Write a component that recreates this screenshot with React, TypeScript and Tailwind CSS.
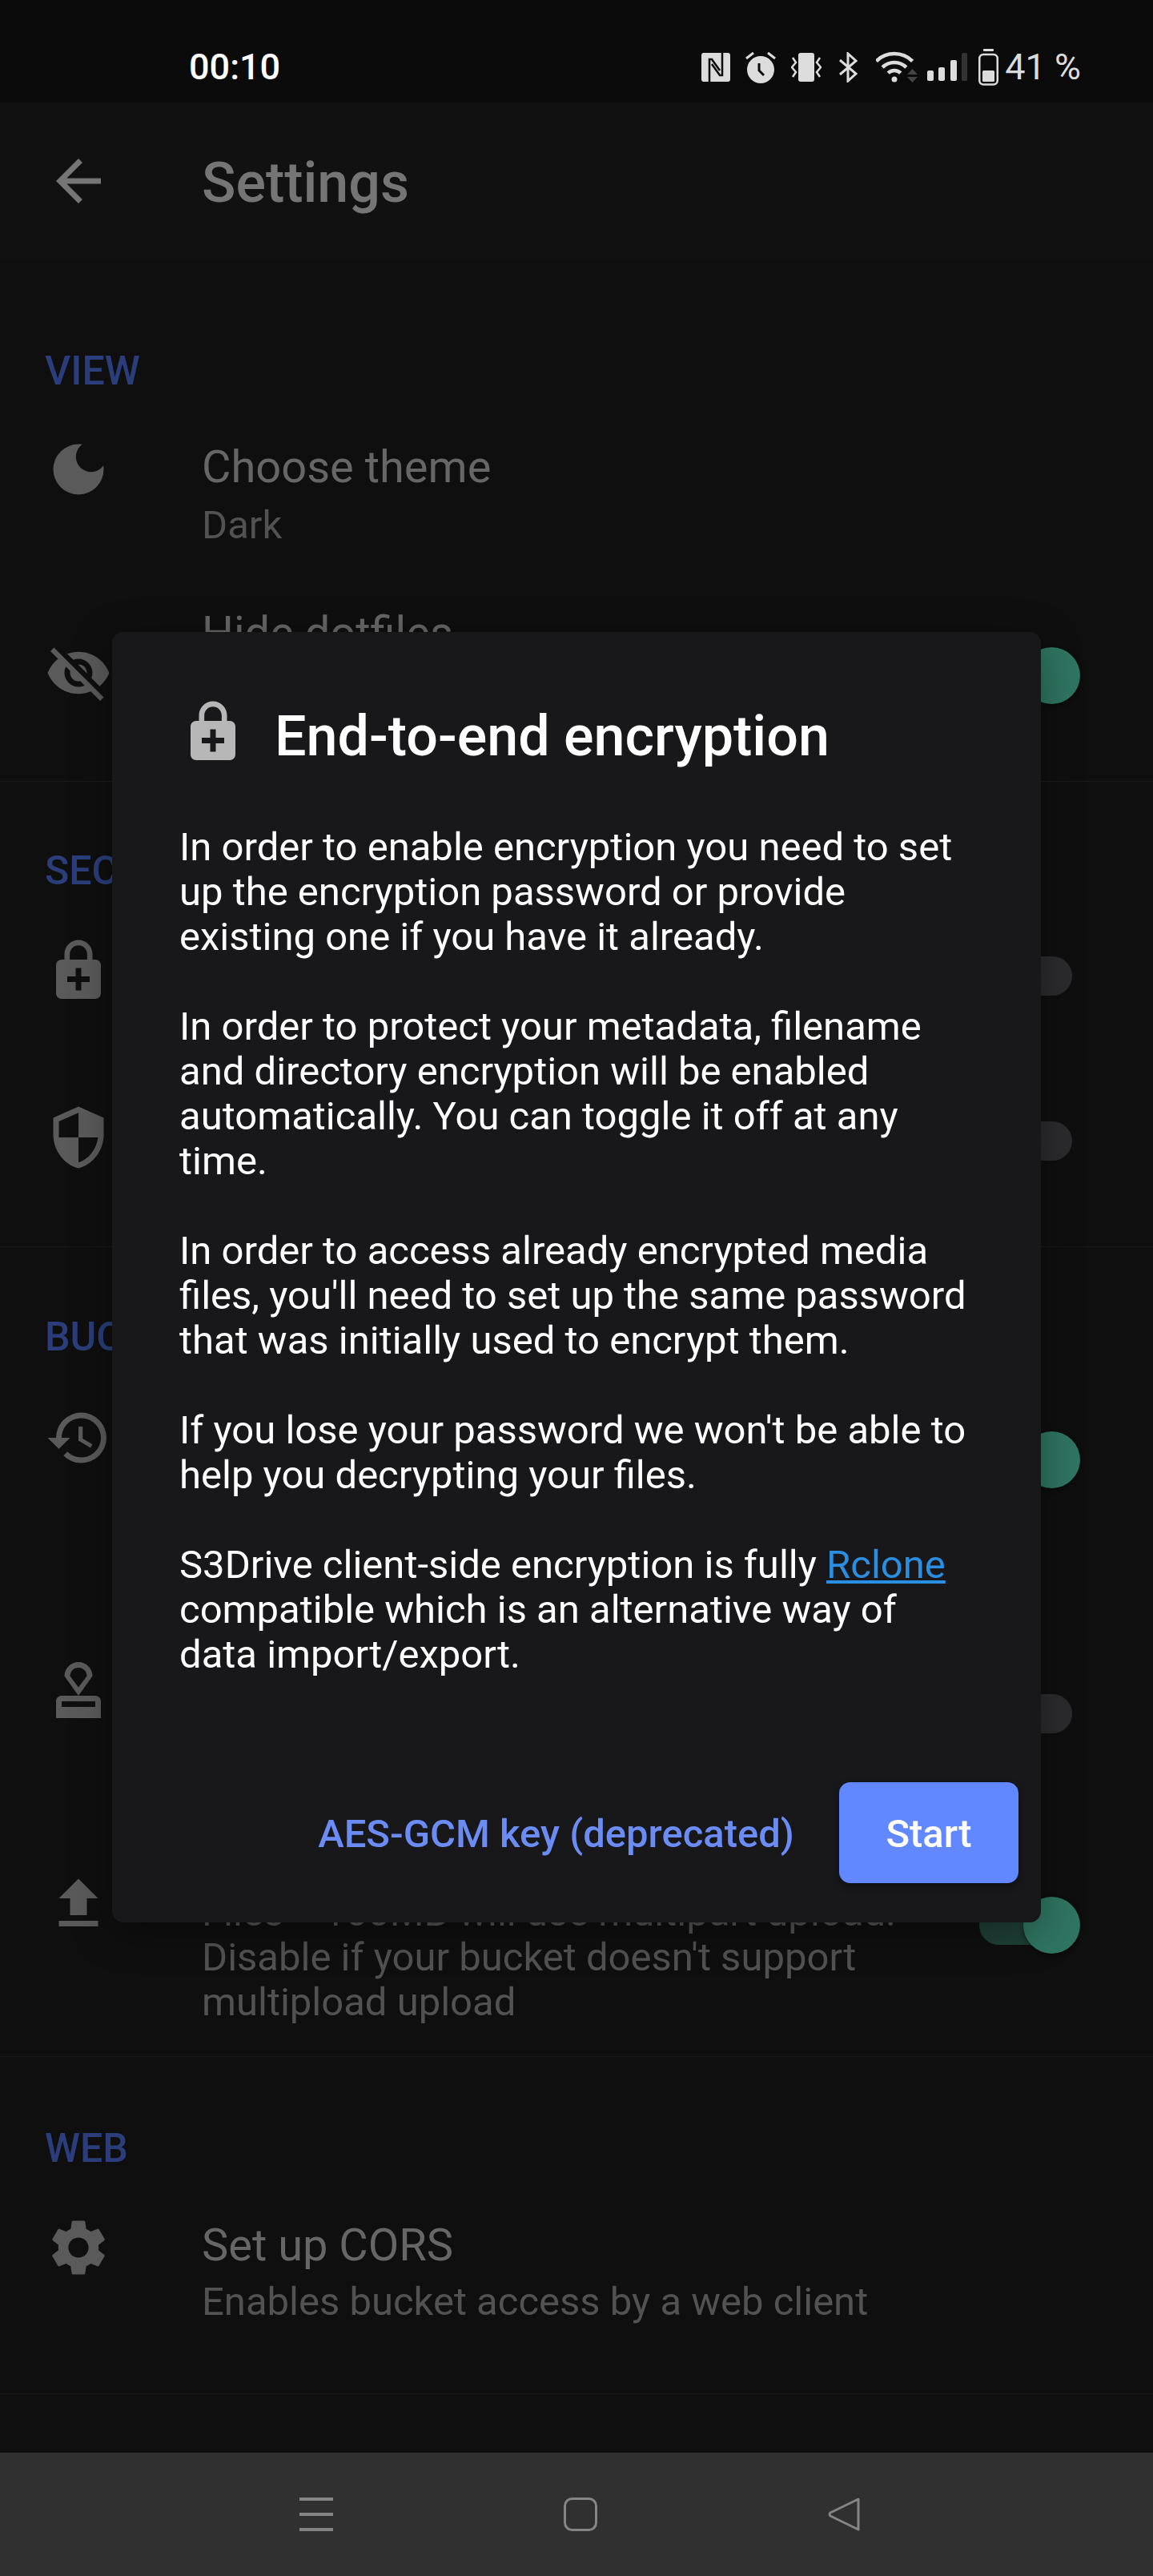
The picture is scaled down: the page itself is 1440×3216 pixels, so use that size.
import type { ReactNode } from "react";
import {
  MdApproval,
  MdArrowBack,
  MdDarkMode,
  MdEnhancedEncryption,
  MdFileUpload,
  MdHistory,
  MdSecurity,
  MdSettings,
  MdVisibilityOff,
} from "react-icons/md";

function SectionLabel({ children }: { children: ReactNode }) {
  return <div className="h-[56px] text-[50px] leading-[56px] font-medium text-[#2b3e7b]">{children}</div>;
}

function Switch({ on, className }: { on?: boolean; className: string }) {
  return (
    <div className={`relative h-[71px] w-[126px] shrink-0 ${className}`}>
      <div
        className={`absolute left-0 top-[11px] h-[49px] w-[116px] rounded-full ${on ? "bg-[#1f4137]" : "bg-[#2b2b2d]"}`}
      />
      <div
        className={`absolute top-0 h-[71px] w-[71px] rounded-full ${on ? "right-0 bg-[#2f7561]" : "left-0 bg-[#3a3a3a]"} shadow-[0_2px_6px_rgba(0,0,0,0.4)]`}
      />
    </div>
  );
}

function Row({
  icon,
  height,
  iconTop,
  children,
  toggle,
}: {
  icon: ReactNode;
  height: string;
  iconTop: string;
  children?: ReactNode;
  toggle?: ReactNode;
}) {
  return (
    <div className={`flex ${height}`}>
      <div className={`h-[84px] w-[84px] shrink-0 text-[84px] text-[#5a5a5a] ${iconTop}`}>{icon}</div>
      <div className="ml-[112px] min-w-0 flex-1">{children}</div>
      {toggle}
    </div>
  );
}

function StatusIcons() {
  return (
    <div className="flex items-center text-[#dcdcdc]">
      {/* nfc */}
      <svg width="36" height="36" viewBox="0 0 36 36">
        <rect width="36" height="36" rx="3" fill="#dcdcdc" />
        <path d="M10 36V8h3l10 14M26 0v28h-3L13 14" fill="none" stroke="#0b0b0b" strokeWidth="2.5" />
      </svg>
      {/* alarm */}
      <svg className="ml-[19px]" width="38" height="40" viewBox="0 0 38 40">
        <circle cx="19" cy="23" r="17" fill="#dcdcdc" />
        <path d="M1 9l9-7M37 9l-9-7" stroke="#dcdcdc" strokeWidth="3" />
        <path d="M17 15v9l6 6" fill="none" stroke="#0b0b0b" strokeWidth="3" />
      </svg>
      {/* vibrate */}
      <svg className="ml-[19px]" width="38" height="36" viewBox="0 0 38 36">
        <rect x="9" width="20" height="36" rx="3" fill="#dcdcdc" />
        <path d="M2 6l4 6-5 6 5 6-4 6M36 6l-4 6 5 6-5 6 4 6" fill="none" stroke="#dcdcdc" strokeWidth="2.5" />
      </svg>
      {/* bluetooth */}
      <svg className="ml-[21px]" width="24" height="38" viewBox="0 0 24 38">
        <path d="M2 10l20 17-10 9V2l10 9L2 28" fill="none" stroke="#dcdcdc" strokeWidth="3" />
      </svg>
      {/* wifi */}
      <svg className="ml-[23px]" width="52" height="40" viewBox="0 0 52 40">
        <path
          d="M0.4 12.4A32 32 0 0 1 45.6 12.4M8.2 20.2A21 21 0 0 1 37.8 20.2M15.2 27.2A11 11 0 0 1 30.8 27.2"
          fill="none"
          stroke="#dcdcdc"
          strokeWidth="4.5"
        />
        <circle cx="23" cy="35" r="3.5" fill="#dcdcdc" />
        <path d="M39 29l6.500-7 6.500 7zM39 32l6.500 7 6.500-7z" fill="#444444" />
      </svg>
      {/* signal */}
      <svg className="ml-[12px]" width="50" height="36" viewBox="0 0 50 36">
        <rect y="22" width="8" height="13" rx="2" fill="#dcdcdc" />
        <rect x="14" y="18" width="8" height="17" rx="2" fill="#dcdcdc" />
        <rect x="29" y="9" width="8" height="26" rx="2" fill="#dcdcdc" />
        <rect x="43" width="7" height="35" rx="2" fill="#333333" />
      </svg>
      {/* battery */}
      <svg className="ml-[14px]" width="25" height="46" viewBox="0 0 25 46">
        <rect x="6" width="13" height="3" rx="1" fill="#dcdcdc" />
        <rect x="1.250" y="7" width="22.500" height="37.500" rx="5" fill="none" stroke="#dcdcdc" strokeWidth="2.500" />
        <rect x="5" y="27" width="15" height="14" rx="1.500" fill="#dcdcdc" />
      </svg>
      <span className="ml-[8px] text-[45px] leading-[52px]">41 %</span>
    </div>
  );
}

function EncryptionDialog() {
  return (
    <div className="absolute left-[140px] top-[789px] flex h-[1611px] w-[1160px] flex-col rounded-[14px] bg-[#18181b] shadow-[0_12px_50px_rgba(0,0,0,0.35)]">
      <div className="mt-[83px] flex h-[84px] items-center pl-[84px]">
        <MdEnhancedEncryption className="shrink-0 text-[84px] text-[#b7b7b7]" />
        <h2 className="ml-[35px] pt-[9px] text-[70px] leading-[82px] font-medium text-white">End-to-end encryption</h2>
      </div>
      <div className="mt-[74px] flex flex-col gap-[56px] pl-[84px] pr-[80px] text-[49px] leading-[56px] text-white">
        <p>In order to enable encryption you need to set up the encryption password or provide existing one if you have it already.</p>
        <p>In order to protect your metadata, filename and directory encryption will be enabled automatically. You can toggle it off at any time.</p>
        <p>In order to access already encrypted media files, you'll need to set up the same password that was initially used to encrypt them.</p>
        <p>If you lose your password we won't be able to help you decrypting your files.</p>
        <p>
          S3Drive client-side encryption is fully <span className="text-[#2a8ee2] underline">Rclone</span> compatible which is an alternative way of data import/export.
        </p>
      </div>
      <div className="mt-auto flex items-center justify-end pb-[49px] pr-[28px]">
        <span className="pt-[3px] text-[49px] leading-[56px] font-medium text-[#6b8cf5]">AES-GCM key (deprecated)</span>
        <button className="ml-[56px] h-[126px] w-[224px] rounded-[14px] bg-[#6188ff] pt-[3px] text-[49px] font-medium text-white shadow-[0_4px_10px_rgba(0,0,0,0.35)]">
          Start
        </button>
      </div>
    </div>
  );
}

export default function App() {
  const title = "text-[56px] leading-[64px] text-[#666666]";
  const sub = "text-[49px] leading-[56px] text-[#525252]";

  return (
    <div className="relative flex h-[3216px] w-[1440px] flex-col overflow-hidden bg-[#0f0f0f] font-['Roboto',sans-serif]">
      {/* Status bar */}
      <div className="flex h-[128px] shrink-0 items-center justify-between bg-[#0b0b0b] pl-[236px] pr-[90px] pt-[40px]">
        <span className="text-[45px] leading-[52px] font-medium text-white">00:10</span>
        <StatusIcons />
      </div>

      {/* App bar */}
      <div className="flex h-[195px] shrink-0 items-center bg-[#111111] pl-[56px]">
        <MdArrowBack className="text-[84px] text-[#757575]" />
        <h1 className="ml-[112px] pt-[4px] text-[70px] leading-[82px] font-medium text-[#757575]">Settings</h1>
      </div>

      <main className="flex-1">
        <section className="border-b border-[#1a1a1a] pl-[56px] pr-[91px] pt-[112px]">
          <SectionLabel>VIEW</SectionLabel>
          <Row icon={<MdDarkMode />} height="h-[264px]" iconTop="mt-[53px]">
            <div className={`mt-[60px] ${title}`}>Choose theme</div>
            <div className={`mt-[13px] ${sub}`}>Dark</div>
          </Row>
          <Row icon={<MdVisibilityOff />} height="h-[220px]" iconTop="mt-[43px]" toggle={<Switch on className="mt-[53px]" />}>
            <div className={`mt-[3px] ${title}`}>Hide dotfiles</div>
          </Row>
        </section>

        <section className="border-b border-[#1a1a1a] pl-[56px] pr-[91px] pt-[83px]">
          <SectionLabel>SECURITY</SectionLabel>
          <Row icon={<MdEnhancedEncryption />} height="h-[208px]" iconTop="mt-[55px]" toggle={<Switch className="mt-[68px]" />} />
          <Row icon={<MdSecurity />} height="h-[233px]" iconTop="mt-[55px]" toggle={<Switch className="mt-[66px]" />} />
        </section>

        <section className="border-b border-[#1a1a1a] pl-[56px] pr-[91px] pt-[84px]">
          <SectionLabel>BUCKET</SectionLabel>
          <Row icon={<MdHistory />} height="h-[276px]" iconTop="mt-[56px]" toggle={<Switch on className="mt-[90px]" />} />
          <Row icon={<MdApproval />} height="h-[310px]" iconTop="mt-[95px]" toggle={<Switch className="mt-[131px]" />} />
          <Row icon={<MdFileUpload />} height="h-[284px]" iconTop="mt-[52px]" toggle={<Switch on className="mt-[85px]" />}>
            <div className={`mt-[77px] ${sub}`}>
              <div>Files &gt; 100MB will use multipart upload.</div>
              <div>Disable if your bucket doesn't support</div>
              <div>multipload upload</div>
            </div>
          </Row>
        </section>

        <section className="border-b border-[#1a1a1a] pl-[56px] pr-[91px] pt-[86px]">
          <SectionLabel>WEB</SectionLabel>
          <Row icon={<MdSettings />} height="h-[278px]" iconTop="mt-[54px]">
            <div className={`mt-[61px] ${title}`}>Set up CORS</div>
            <div className={`mt-[11px] ${sub}`}>Enables bucket access by a web client</div>
          </Row>
        </section>
      </main>

      {/* Navigation bar */}
      <nav className="flex h-[154px] shrink-0 items-center justify-center gap-[288px] bg-[#303030] pl-[10px]">
        <svg width="42" height="42" viewBox="0 0 42 42" fill="#858585">
          <rect width="42" height="4" />
          <rect y="19" width="42" height="4" />
          <rect y="38" width="42" height="4" />
        </svg>
        <svg width="42" height="42" viewBox="0 0 42 42" fill="none" stroke="#858585" strokeWidth="3">
          <rect x="1.500" y="1.500" width="39" height="39" rx="9" />
        </svg>
        <svg width="42" height="42" viewBox="0 0 42 42" fill="none" stroke="#858585" strokeWidth="3" strokeLinejoin="round">
          <path d="M38 2L3 19a3 3 0 0 0 0 4l35 17z" />
        </svg>
      </nav>

      <EncryptionDialog />
    </div>
  );
}
